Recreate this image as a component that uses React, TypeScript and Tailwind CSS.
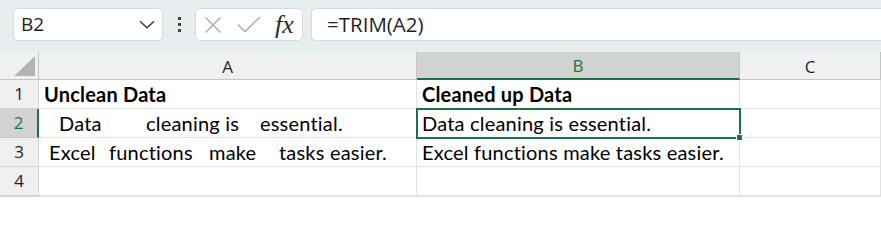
import React from "react";

const cellFont = { fontFamily: "Lato, 'Liberation Sans', sans-serif" };
const uiFont = { fontFamily: "'Open Sans', 'Noto Sans', sans-serif" };

function NameBox() {
  return (
    <div className="flex h-[33px] w-[150px] items-center justify-between rounded-[5px] border border-[#d6dadd] bg-white pl-[7px] pr-[7px]">
      <span className="text-[19px] text-[#1f1f1f]" style={uiFont}>
        B2
      </span>
      <svg width="16" height="9" viewBox="0 0 16 9" fill="none">
        <path d="M1 1.2 L8 7.8 L15 1.2" stroke="#3b3b3b" strokeWidth="1.4" />
      </svg>
    </div>
  );
}

function FormulaButtons() {
  return (
    <div className="flex h-[33px] w-[108px] items-center rounded-[5px] border border-[#d6dadd] bg-white pl-[8px]">
      <svg width="18" height="18" viewBox="0 0 18 18" fill="none">
        <path d="M1.5 1.5 L16.5 16.5 M16.5 1.5 L1.5 16.5" stroke="#a8a8a8" strokeWidth="1.3" />
      </svg>
      <svg className="ml-[15px]" width="24" height="17" viewBox="0 0 24 17" fill="none">
        <path d="M1 8.5 L8 15.5 L23 1" stroke="#a8a8a8" strokeWidth="1.3" />
      </svg>
      <span
        className="ml-[14px] text-[26px] italic leading-none text-[#2a2a2a]"
        style={{ fontFamily: "'Liberation Serif', 'DejaVu Serif', serif" }}
      >
        fx
      </span>
    </div>
  );
}

function Toolbar() {
  return (
    <div className="flex h-[52px] items-start bg-[#e8edf0] pl-[13px] pt-[8px]">
      <NameBox />
      <div className="flex w-[32px] flex-col items-center gap-[3px] pt-[9px]">
        <span className="h-[3px] w-[3px] bg-[#444]" />
        <span className="h-[3px] w-[3px] bg-[#444]" />
        <span className="h-[3px] w-[3px] bg-[#444]" />
      </div>
      <FormulaButtons />
      <div className="ml-[8px] flex h-[33px] flex-1 items-center rounded-l-[5px] border border-r-0 border-[#d6dadd] bg-white pl-[15px]">
        <span className="text-[20.5px] text-[#1f1f1f]" style={uiFont}>
          =TRIM(A2)
        </span>
      </div>
    </div>
  );
}

function ColHeader({ label, active }: { label: string; active?: boolean }) {
  return (
    <div
      className={
        active
          ? "flex items-center justify-center border-b-2 border-r border-b-[#1e7145] border-r-[#c4c4c4] bg-[#d2d2d2] text-[17px] text-[#1e7145]"
          : "flex items-center justify-center border-b border-r border-[#c4c4c4] bg-[#f0f0f0] text-[17px] text-[#1f1f1f]"
      }
      style={uiFont}
    >
      <span className="pt-[2px]">{label}</span>
    </div>
  );
}

function RowHeader({ n, active }: { n?: number; active?: boolean }) {
  return (
    <div
      className={
        active
          ? "flex items-center justify-center border-b border-r-2 border-b-[#c4c4c4] border-r-[#1e7145] bg-[#d2d2d2] text-[17px] text-[#1e7145]"
          : "flex items-center justify-center border-b border-r border-[#d4d4d4] bg-[#f0f0f0] text-[17px] text-[#1f1f1f]"
      }
      style={uiFont}
    >
      {n}
    </div>
  );
}

function Cell({ children, className = "" }: { children?: React.ReactNode; className?: string }) {
  return (
    <div
      className={`relative flex items-center whitespace-pre border-b border-r border-[#e1e1e1] bg-white text-[20px] tracking-[0.2px] text-black ${className}`}
      style={cellFont}
    >
      {children}
    </div>
  );
}

function Spaced({ words }: { words: [string, number][] }) {
  return (
    <>
      {words.map(([w, width], i) => (
        <span key={i} className="inline-block" style={{ width }}>
          {w}
        </span>
      ))}
    </>
  );
}

export default function App() {
  return (
    <div className="h-[200px] w-[881px] overflow-hidden bg-white">
      <Toolbar />
      <div className="grid grid-cols-[39px_378px_323px_141px] grid-rows-[28px_29px_29px_29px_29px]">
        <div className="relative border-b border-r border-[#c4c4c4] bg-[#f0f0f0]">
          <svg className="absolute bottom-[3px] right-[3px]" width="21" height="20" viewBox="0 0 21 20">
            <path d="M21 0 L21 20 L0 20 Z" fill="#b4b4b4" />
          </svg>
        </div>
        <ColHeader label="A" />
        <ColHeader label="B" active />
        <ColHeader label="C" />

        <RowHeader n={1} />
        <Cell className="pl-[5px] font-bold">Unclean Data</Cell>
        <Cell className="pl-[5px] font-bold">Cleaned up Data</Cell>
        <Cell />

        <RowHeader n={2} active />
        <Cell className="pl-[20px]">
          <Spaced words={[["Data", 87], ["cleaning is", 114], ["essential.", 120]]} />
        </Cell>
        <Cell className="z-10 pl-[5px]">
          Data cleaning is essential.
          <div className="pointer-events-none absolute -left-[1px] -top-[1px] h-[31px] w-[325px] border-2 border-[#1e7145]" />
          <div className="absolute -bottom-[4px] -right-[4px] h-[7px] w-[7px] border border-white bg-[#1e7145]" />
        </Cell>
        <Cell />

        <RowHeader n={3} />
        <Cell className="pl-[10px]">
          <Spaced words={[["Excel", 60], ["functions", 100], ["make", 70], ["tasks easier.", 120]]} />
        </Cell>
        <Cell className="pl-[5px]">Excel functions make tasks easier.</Cell>
        <Cell />

        <RowHeader n={4} />
        <Cell />
        <Cell />
        <Cell />

        <RowHeader />
        <Cell />
        <Cell />
        <Cell />
      </div>
    </div>
  );
}
